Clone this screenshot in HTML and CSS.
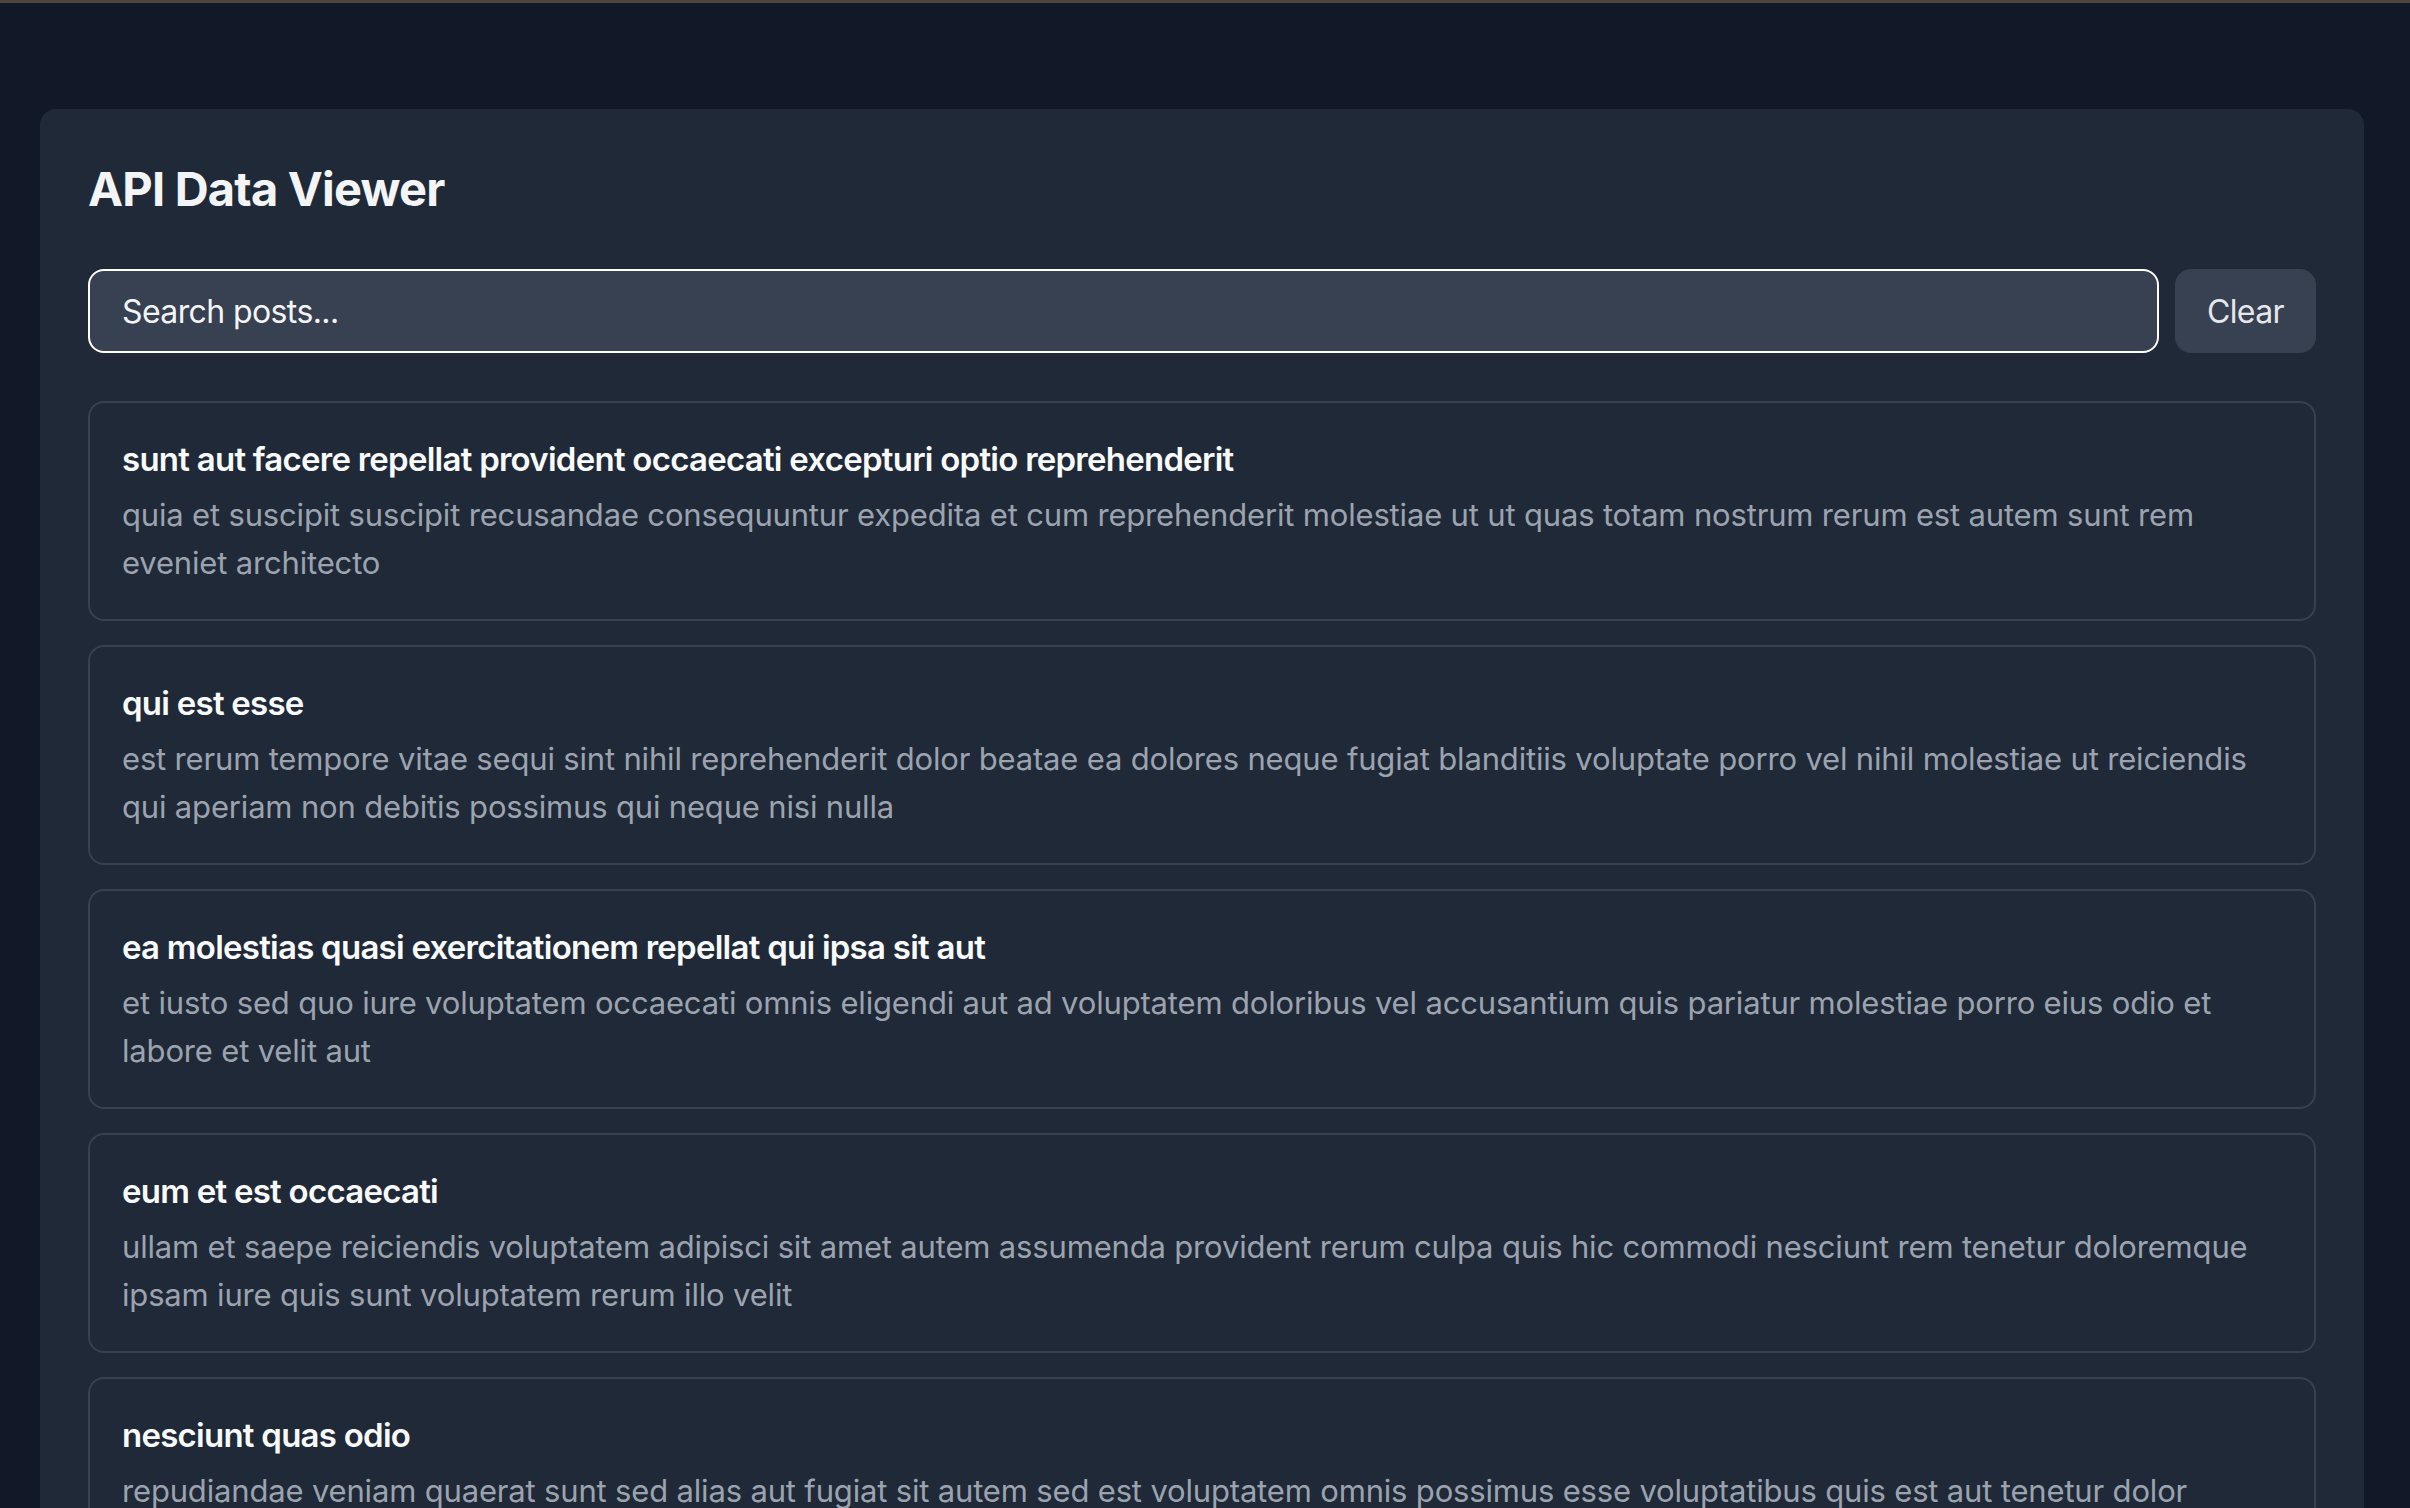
FILE: index.html
```html
<!DOCTYPE html>
<html lang="en">
<head>
<meta charset="utf-8">
<title>API Data Viewer</title>
<link rel="stylesheet" href="styles.css">
</head>
<body>
<div class="topbar"></div>
<main class="page">
  <section class="panel">
    <h1 class="heading">API Data Viewer</h1>
    <div class="search-row">
      <input class="search" type="text" placeholder="Search posts...">
      <button class="clear-btn" type="button">Clear</button>
    </div>
    <ul class="posts">
      <li class="post">
        <h2 class="post-title">sunt aut facere repellat provident occaecati excepturi optio reprehenderit</h2>
        <p class="post-body">quia et suscipit suscipit recusandae consequuntur expedita et cum reprehenderit molestiae ut ut quas totam nostrum rerum est autem sunt rem eveniet architecto</p>
      </li>
      <li class="post">
        <h2 class="post-title">qui est esse</h2>
        <p class="post-body">est rerum tempore vitae sequi sint nihil reprehenderit dolor beatae ea dolores neque fugiat blanditiis voluptate porro vel nihil molestiae ut reiciendis qui aperiam non debitis possimus qui neque nisi nulla</p>
      </li>
      <li class="post">
        <h2 class="post-title">ea molestias quasi exercitationem repellat qui ipsa sit aut</h2>
        <p class="post-body">et iusto sed quo iure voluptatem occaecati omnis eligendi aut ad voluptatem doloribus vel accusantium quis pariatur molestiae porro eius odio et labore et velit aut</p>
      </li>
      <li class="post">
        <h2 class="post-title">eum et est occaecati</h2>
        <p class="post-body">ullam et saepe reiciendis voluptatem adipisci sit amet autem assumenda provident rerum culpa quis hic commodi nesciunt rem tenetur doloremque ipsam iure quis sunt voluptatem rerum illo velit</p>
      </li>
      <li class="post">
        <h2 class="post-title">nesciunt quas odio</h2>
        <p class="post-body">repudiandae veniam quaerat sunt sed alias aut fugiat sit autem sed est voluptatem omnis possimus esse voluptatibus quis est aut tenetur dolor neque</p>
      </li>
      <li class="post">
        <h2 class="post-title">dolorem eum magni eos aperiam quia</h2>
        <p class="post-body">ut aspernatur corporis harum nihil quis provident sequi mollitia nobis aliquid molestiae perspiciatis et ea nemo ab reprehenderit accusantium quas voluptate dolores velit et doloremque molestiae</p>
      </li>
    </ul>
  </section>
</main>
</body>
</html>
```
FILE: styles.css
```css
* { box-sizing: border-box; }

html, body {
  margin: 0;
  padding: 0;
  background: #111827;
  font-family: Inter, "Noto Sans", "Liberation Sans", sans-serif;
  color: #f3f4f6;
}

.topbar {
  height: 3px;
  background: #4d463f;
}

.page {
  padding: 106px 46px 40px 40px;
}

.panel {
  background: #1f2937;
  border-radius: 16px;
  padding: 48px;
}

.heading {
  margin: 0 0 48px;
  font-size: 47px;
  line-height: 64px;
  font-weight: 700;
  letter-spacing: -0.8px;
  color: #f3f4f6;
}

.search-row {
  display: flex;
  gap: 16px;
  margin-bottom: 48px;
}

.search {
  flex: 1;
  height: 84px;
  padding: 0 32px;
  background: #374151;
  border: 2px solid #ffffff;
  border-radius: 16px;
  font-family: inherit;
  font-size: 32px;
  letter-spacing: -0.6px;
  color: #f3f4f6;
  outline: none;
}

.search::placeholder {
  color: #f3f4f6;
  opacity: 1;
}

.clear-btn {
  height: 84px;
  padding: 0 32px;
  background: #374151;
  border: none;
  border-radius: 16px;
  font-family: inherit;
  font-size: 32px;
  letter-spacing: -0.6px;
  color: #e5e7eb;
}

.posts {
  list-style: none;
  margin: 0;
  padding: 0;
  display: flex;
  flex-direction: column;
  gap: 24px;
}

.post {
  border: 2px solid #374151;
  border-radius: 16px;
  padding: 32px;
}

.post-title {
  margin: 0 0 8px;
  font-size: 33px;
  line-height: 48px;
  font-weight: 600;
  letter-spacing: -0.75px;
  color: #f9fafb;
}

.post-body {
  margin: 0;
  font-size: 31px;
  line-height: 48px;
  letter-spacing: -0.17px;
  color: #9ca3af;
}
```
